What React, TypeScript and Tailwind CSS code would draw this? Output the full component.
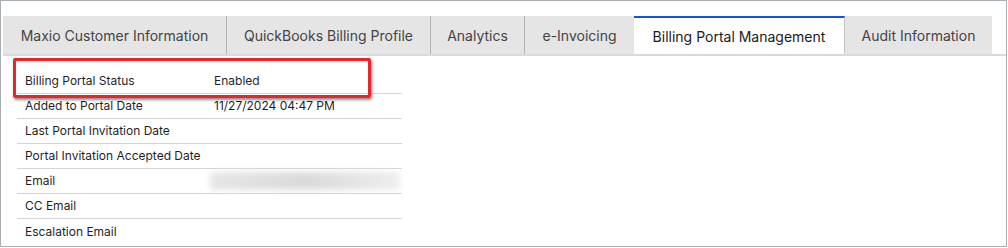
import React from 'react'

const tabs = [
    { name: 'Maxio Customer Information', width: 'w-[224px]' },
    { name: 'QuickBooks Billing Profile', width: 'w-[204px]' },
    { name: 'Analytics', width: 'w-[94px]' },
    { name: 'e-Invoicing', width: 'w-[109px]' },
    { name: 'Billing Portal Management', width: 'w-[211px]' },
    { name: 'Audit Information', width: 'w-[147px]' },
]

const rows: { label: string; value?: string; blurred?: boolean }[] = [
    { label: 'Billing Portal Status', value: 'Enabled' },
    { label: 'Added to Portal Date', value: '11/27/2024 04:47 PM' },
    { label: 'Last Portal Invitation Date' },
    { label: 'Portal Invitation Accepted Date' },
    { label: 'Email', blurred: true },
    { label: 'CC Email' },
    { label: 'Escalation Email' },
]

export default function App() {
    const active = 'Billing Portal Management'

    return (
        <div className="w-[1008px] h-[248px] bg-white overflow-hidden" style={{ fontFamily: 'Inter, "Noto Sans", sans-serif' }}>
            <div className="relative w-[1007px] h-[247px] border border-[#a9aeb3] pt-[15px] pl-[2px]">
                {/* tab bar */}
                <div className="flex border-b-2 border-[#dadada]">
                    {tabs.map((tab, i) => {
                        const isActive = tab.name === active
                        const nextActive = tabs[i + 1]?.name === active
                        return (
                            <div
                                key={tab.name}
                                className={
                                    tab.width + ' ' +
                                    (isActive
                                        ? 'shrink-0 whitespace-nowrap h-[38px] flex items-center justify-center text-[14px] text-[#1a1a1a] bg-white border-t-2 border-[#1452e6] border-r border-r-[#c4c4c4]'
                                        : 'shrink-0 whitespace-nowrap h-[38px] flex items-center justify-center text-[14px] text-[#444] bg-[#e5e5e5] ' +
                                          (nextActive || i === tabs.length - 1 ? '' : 'border-r border-[#b4b4b4]'))
                                }
                            >
                                {tab.name}
                            </div>
                        )
                    })}
                </div>

                {/* details table */}
                <div className="ml-[14px] mt-[13px] w-[385px] text-[12px] text-[#1f1f1f]">
                    {rows.map((row, i) => (
                        <div
                            key={row.label}
                            className={
                                'h-[25px] flex items-center pl-[8px] whitespace-nowrap ' +
                                (i < rows.length - 1 ? 'border-b border-[#d4d4d4]' : '')
                            }
                        >
                            <span className="w-[189px] shrink-0">{row.label}</span>
                            {row.value && <span>{row.value}</span>}
                            {row.blurred && (
                                <div className="ml-[-4px] h-[18px] w-[190px] rounded-sm bg-gradient-to-r from-[#e6e6e6] via-[#dadada] to-[#eeeeee] blur-[3px]" />
                            )}
                        </div>
                    ))}
                </div>

                {/* highlight box */}
                <div className="absolute left-[12px] top-[57px] w-[358px] h-[40px] border-[3px] border-[#ec2327] rounded-[2px] shadow-[1px_2px_3px_rgba(0,0,0,0.45)]" />
            </div>
        </div>
    )
}
